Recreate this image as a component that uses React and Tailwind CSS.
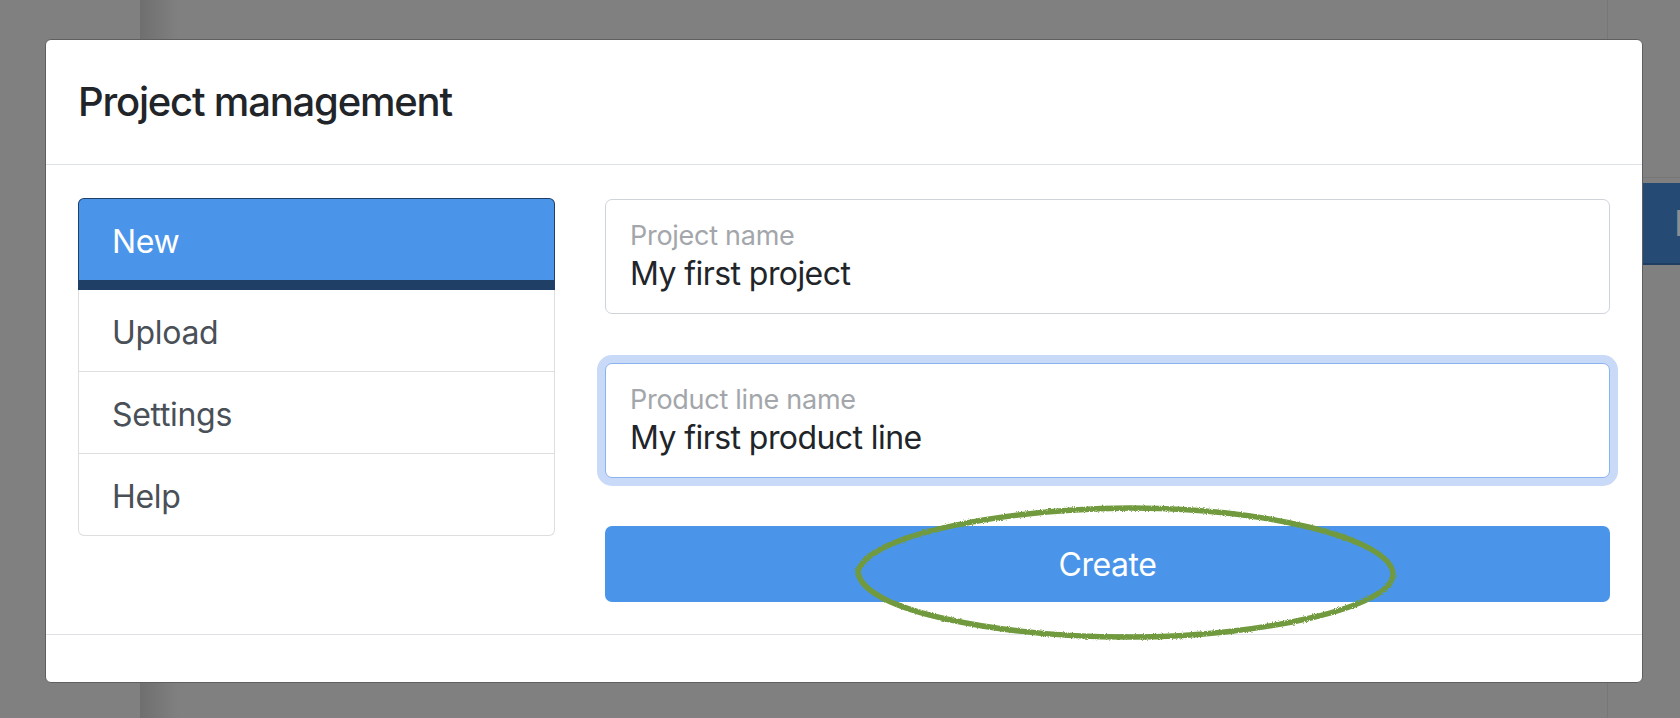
import { useState } from 'react';

const menuItems = ['New', 'Upload', 'Settings', 'Help'];

const FloatingField = ({ label, value, focused }) => (
  <div
    className={`h-[115px] rounded-[7px] border bg-white pl-[24px] pt-[20px] ${
      focused ? 'border-[#8ab4f0] shadow-[0_0_0_8px_#c9d9f8]' : 'border-[#ced4da]'
    }`}
  >
    <div className="text-[27px] leading-[32px] tracking-[-0.01em] text-[#a3a6aa]">{label}</div>
    <div className="mt-[2px] text-[32px] leading-[40px] tracking-[-0.018em] text-[#212529]">{value}</div>
  </div>
);

const App = () => {
  const [active, setActive] = useState('New');

  return (
    <div
      className="relative h-[718px] w-[1680px] overflow-hidden bg-[#808080]"
      style={{ fontFamily: 'Inter, "Noto Sans", sans-serif' }}
    >
      {/* dimmed page behind the backdrop */}
      <div className="flex h-full">
        <div className="w-[140px]" />
        <div className="w-[38px] bg-gradient-to-r from-[#6f6f6f] to-[#808080]" />
        <div className="flex-1" />
        <div className="flex w-[73px] flex-col border-l border-[#777777]">
          <div className="h-[178px] border-b border-[#777777]" />
          <div className="mt-[5px] flex h-[82px] items-center overflow-hidden border-b-2 border-[#1f3d62] bg-[#254a74] pl-[66px] text-[36px] text-[#8a8d91]">
            F
          </div>
        </div>
      </div>

      {/* modal */}
      <div className="absolute left-[45px] top-[39px] flex h-[644px] w-[1598px] flex-col rounded-[6px] border border-[#5f5f5f] bg-white">
        <div className="flex h-[125px] items-center border-b border-[#dee2e6] px-[32px]">
          <h5 className="text-[40px] font-medium leading-[60px] tracking-[-0.03em] text-[#212529]">Project management</h5>
        </div>

        <div className="flex h-[469px] px-[32px] pt-[33px]">
          {/* side menu */}
          <div className="flex w-[477px] flex-col self-start">
            {menuItems.map((item, i) => {
              const isActive = item === active;
              const isLast = i === menuItems.length - 1;
              return (
                <button
                  key={item}
                  onClick={() => setActive(item)}
                  className={`flex items-center pl-[33px] pt-[4px] text-left text-[32px] tracking-[-0.01em] ${
                    isActive
                      ? 'h-[92px] rounded-t-[6px] border-x border-t border-b-[10px] border-[#1f3f66] bg-[#4a95ea] text-white'
                      : 'h-[82px] border-x border-b border-[#dedede] bg-white text-[#495057]'
                  } ${isLast ? 'rounded-b-[6px]' : ''}`}
                >
                  {item}
                </button>
              );
            })}
          </div>

          {/* form */}
          <div className="ml-[50px] mt-[1px] flex flex-1 flex-col">
            <FloatingField label="Project name" value="My first project" />
            <div className="mt-[49px]">
              <FloatingField label="Product line name" value="My first product line" focused />
            </div>
            <button className="mt-[48px] h-[76px] rounded-[7px] bg-[#4a95ea] pt-[2px] text-[32px] tracking-[-0.015em] text-white">
              Create
            </button>
          </div>
        </div>

        <div className="h-[48px] border-t border-[#dee2e6]" />
      </div>

      {/* hand drawn highlight round the button */}
      <svg className="pointer-events-none absolute left-[840px] top-[495px]" width="570" height="160" viewBox="0 0 570 160">
        <defs>
          <filter id="rough">
            <feTurbulence type="fractalNoise" baseFrequency="0.9" numOctaves="2" seed="3" />
            <feDisplacementMap in="SourceGraphic" scale="3" />
          </filter>
        </defs>
        <path
          d="M18 76 C 30 38, 170 14, 290 13 C 420 13, 548 42, 553 78 C 556 112, 420 142, 292 142 C 160 142, 20 116, 18 76 Z"
          fill="none"
          stroke="#6f9a3c"
          strokeWidth="5.5"
          filter="url(#rough)"
        />
      </svg>
    </div>
  );
};

export default App;
